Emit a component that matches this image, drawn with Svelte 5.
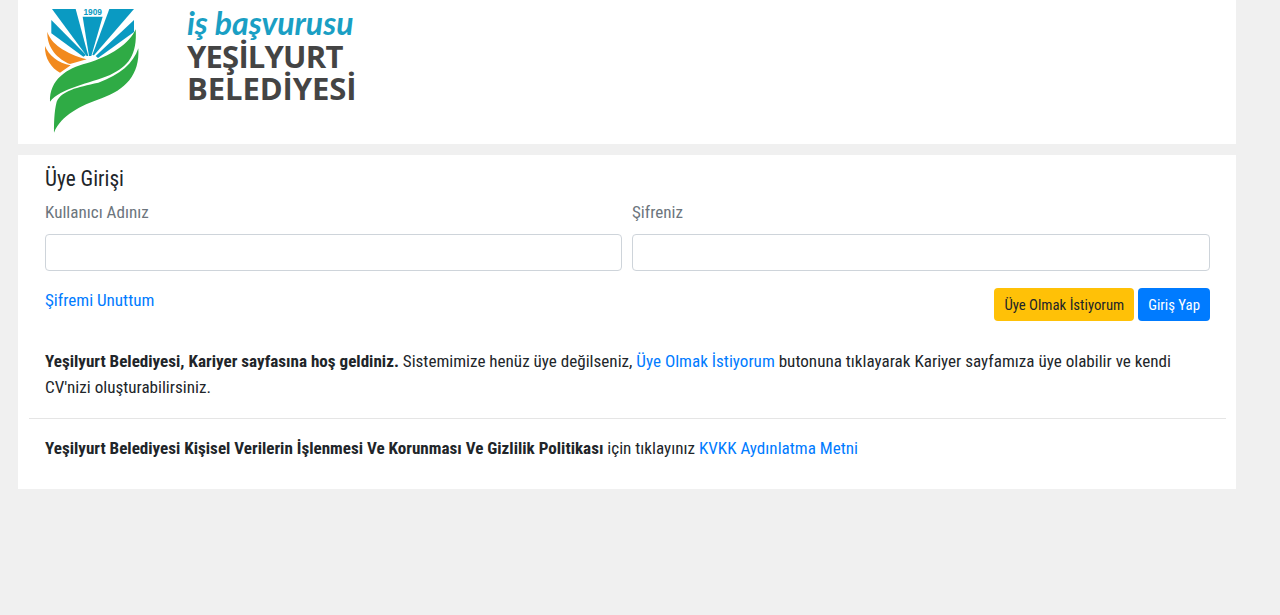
<script lang="ts">
  let username = $state('');
  let password = $state('');
</script>

<div class="page">
  <header class="card head">
    <svg class="mark" viewBox="0 0 360 420" aria-hidden="true">
      <g fill="#0a9ac2">
        <path d="M66 27H137L175 168H170Z" />
        <path d="M64 60L168 165L160 170L64 100Z" />
        <path d="M158 50H218L184 168H177Z" />
        <path d="M238 27H312L192 166L187 165Z" />
        <path d="M312 60V96L204 174L197 168Z" />
      </g>
      <text x="188" y="44" text-anchor="middle" class="year">1909</text>
      <g fill="#f28a1e">
        <path d="M52 95C62 130 105 160 170 178L120 192C85 178 50 145 52 95Z" />
        <path d="M45 138C55 165 85 190 122 196L90 218C65 205 43 175 45 138Z" />
      </g>
      <g fill="#2fab45">
        <path d="M317 88C300 130 240 170 170 190C110 205 58 240 60 305C90 265 180 250 240 225C295 200 322 165 317 88Z" />
        <path d="M325 145C310 190 270 225 205 248C140 262 95 272 80 305C72 335 72 375 72 398C95 345 150 318 215 295C285 270 330 225 325 145Z" />
      </g>
    </svg>
    <div class="brand">
      <span class="tag">iş başvurusu</span>
      <span class="name first">YEŞİLYURT</span>
      <span class="name">BELEDİYESİ</span>
    </div>
  </header>

  <main class="card login">
    <h1>Üye Girişi</h1>
    <div class="fields">
      <label>
        <span>Kullanıcı Adınız</span>
        <input type="text" bind:value={username} />
      </label>
      <label>
        <span>Şifreniz</span>
        <input type="password" bind:value={password} />
      </label>
    </div>
    <div class="actions">
      <a href="#forgot">Şifremi Unuttum</a>
      <div class="buttons">
        <button class="yellow" type="button">Üye Olmak İstiyorum</button>
        <button class="blue" type="button">Giriş Yap</button>
      </div>
    </div>
    <p class="welcome">
      <b>Yeşilyurt Belediyesi, Kariyer sayfasına hoş geldiniz.</b> Sistemimize henüz üye değilseniz,
      <a href="#signup">Üye Olmak İstiyorum</a> butonuna tıklayarak Kariyer sayfamıza üye olabilir ve kendi
      CV'nizi oluşturabilirsiniz.
    </p>
    <hr />
    <p class="kvkk">
      <b>Yeşilyurt Belediyesi Kişisel Verilerin İşlenmesi Ve Korunması Ve Gizlilik Politikası</b> için tıklayınız
      <a href="#kvkk">KVKK Aydınlatma Metni</a>
    </p>
  </main>
</div>

<style>
  :global(body) {
    background: #f0f0f0;
  }
  .page {
    width: 1218px;
    margin-left: 18px;
    height: 615px;
    font-family: Roboto, "Liberation Sans", sans-serif;
    font-stretch: 75%;
    font-size: 17.1px;
    line-height: 24px;
    color: #212529;
  }
  .card {
    background: #fff;
  }
  .head {
    height: 144px;
    display: flex;
    align-items: flex-start;
    margin-bottom: 11px;
  }
  .mark {
    width: 120px;
    height: 140px;
    margin-left: 12px;
    flex: none;
  }
  .year {
    font: bold 25px "Liberation Sans", sans-serif;
    fill: #0a9ac2;
  }
  .brand {
    display: flex;
    flex-direction: column;
    margin-left: 37px;
    padding-top: 6px;
  }
  .tag {
    font-family: Lato, sans-serif;
    font-stretch: 100%;
    font-style: italic;
    font-weight: 700;
    font-size: 32px;
    line-height: 34px;
    color: #1a9fc4;
    height: 34px;
  }
  .name {
    font-family: "Open Sans", sans-serif;
    font-stretch: 100%;
    font-weight: 700;
    font-size: 31px;
    line-height: 32px;
    color: #444;
    letter-spacing: -0.1px;
  }
  .first {
    letter-spacing: -0.8px;
  }
  .login {
    height: 334px;
    padding: 10px 26px 0 27px;
    box-sizing: border-box;
  }
  h1 {
    margin: 0 0 7px;
    font-size: 21.3px;
    font-weight: 400;
    line-height: 28px;
  }
  .fields {
    display: grid;
    grid-template-columns: 577px 1fr;
    gap: 10px;
  }
  label {
    display: block;
  }
  label span {
    display: block;
    color: #6c757d;
    margin-bottom: 10px;
  }
  input {
    display: block;
    width: 100%;
    height: 37px;
    box-sizing: border-box;
    border: 1px solid #ced4da;
    border-radius: 4px;
    background: #fff;
  }
  .actions {
    display: flex;
    justify-content: space-between;
    align-items: flex-start;
    margin-top: 17px;
  }
  a {
    color: #007bff;
    text-decoration: none;
  }
  .buttons {
    display: flex;
    gap: 4px;
  }
  button {
    height: 33px;
    padding: 0 10px;
    border: 0;
    border-radius: 4px;
    font: inherit;
    font-stretch: 75%;
    font-size: 14.8px;
  }
  .yellow {
    background: #ffc107;
    color: #212529;
  }
  .blue {
    background: #007bff;
    color: #fff;
  }
  p {
    margin: 0;
  }
  .welcome {
    margin-top: 27px;
    line-height: 26px;
  }
  hr {
    margin: 18px -16px 0;
    border: 0;
    border-top: 1px solid rgba(0, 0, 0, 0.1);
  }
  .kvkk {
    margin-top: 17px;
  }
</style>
